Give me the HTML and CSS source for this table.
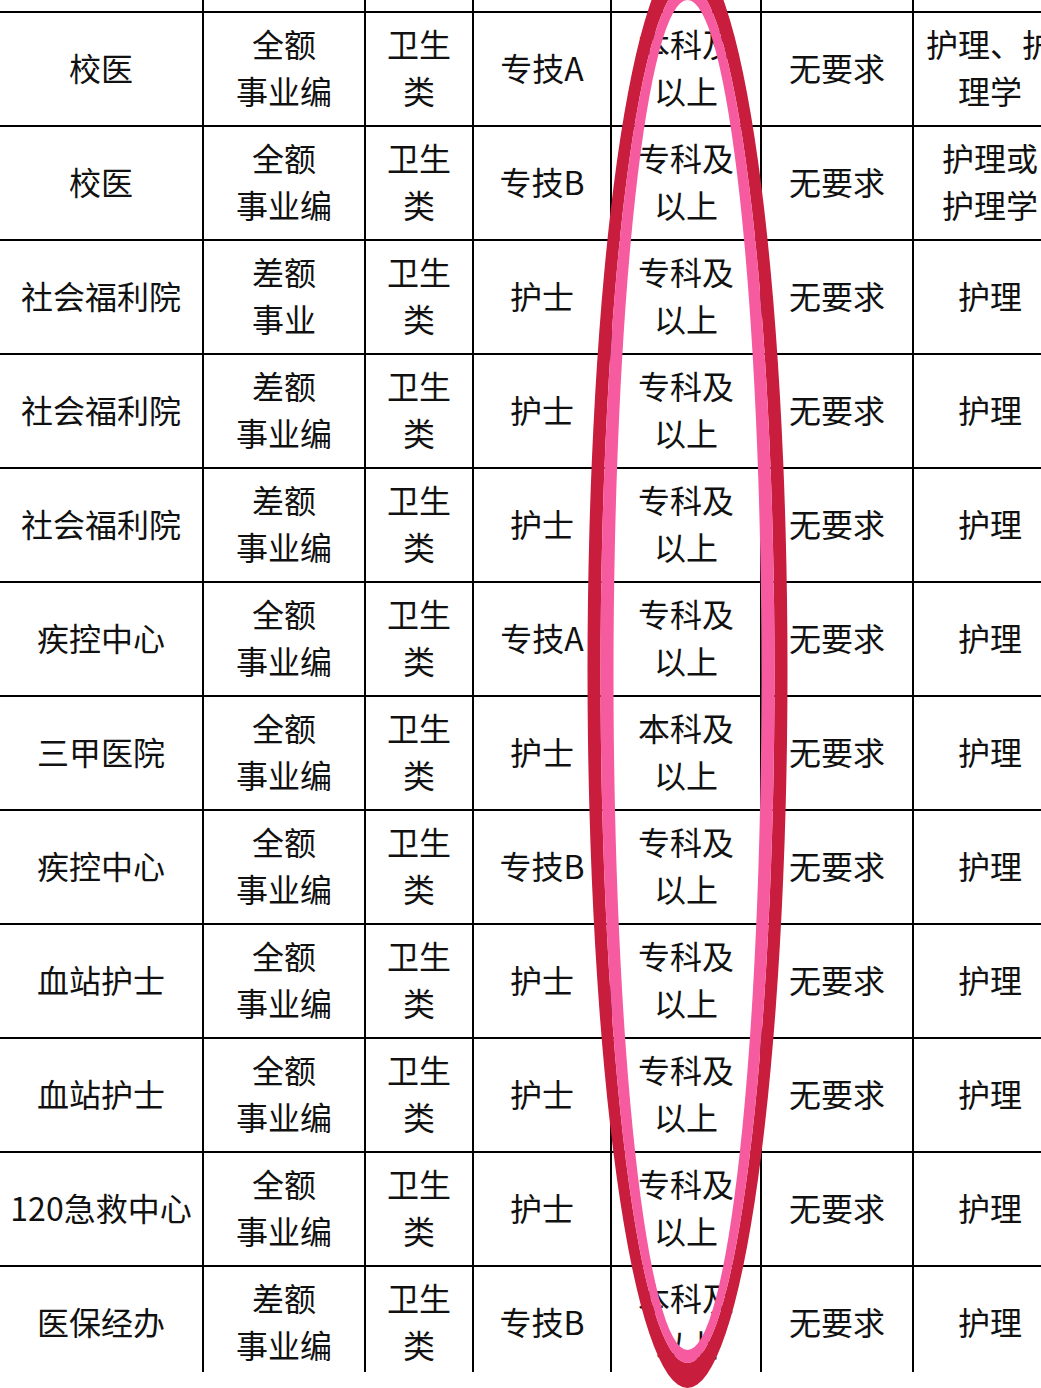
FILE: index.html
```html
<!DOCTYPE html>
<html lang="zh-CN">
<head>
<meta charset="utf-8">
<title>岗位表</title>
<link rel="stylesheet" href="styles.css">
</head>
<body>
<div class="sheet">
  <div class="clip">
    <div class="grid">
      <div class="stub"></div><div class="stub"></div><div class="stub"></div><div class="stub"></div><div class="stub"></div><div class="stub"></div><div class="stub"></div>

      <div class="cell">校医</div><div class="cell">全额<br>事业编</div><div class="cell">卫生<br>类</div><div class="cell">专技A</div><div class="cell">本科及<br>以上</div><div class="cell">无要求</div><div class="cell">护理、护<br>理学</div>

      <div class="cell">校医</div><div class="cell">全额<br>事业编</div><div class="cell">卫生<br>类</div><div class="cell">专技B</div><div class="cell">专科及<br>以上</div><div class="cell">无要求</div><div class="cell">护理或<br>护理学</div>

      <div class="cell">社会福利院</div><div class="cell">差额<br>事业</div><div class="cell">卫生<br>类</div><div class="cell">护士</div><div class="cell">专科及<br>以上</div><div class="cell">无要求</div><div class="cell">护理</div>

      <div class="cell">社会福利院</div><div class="cell">差额<br>事业编</div><div class="cell">卫生<br>类</div><div class="cell">护士</div><div class="cell">专科及<br>以上</div><div class="cell">无要求</div><div class="cell">护理</div>

      <div class="cell">社会福利院</div><div class="cell">差额<br>事业编</div><div class="cell">卫生<br>类</div><div class="cell">护士</div><div class="cell">专科及<br>以上</div><div class="cell">无要求</div><div class="cell">护理</div>

      <div class="cell">疾控中心</div><div class="cell">全额<br>事业编</div><div class="cell">卫生<br>类</div><div class="cell">专技A</div><div class="cell">专科及<br>以上</div><div class="cell">无要求</div><div class="cell">护理</div>

      <div class="cell">三甲医院</div><div class="cell">全额<br>事业编</div><div class="cell">卫生<br>类</div><div class="cell">护士</div><div class="cell">本科及<br>以上</div><div class="cell">无要求</div><div class="cell">护理</div>

      <div class="cell">疾控中心</div><div class="cell">全额<br>事业编</div><div class="cell">卫生<br>类</div><div class="cell">专技B</div><div class="cell">专科及<br>以上</div><div class="cell">无要求</div><div class="cell">护理</div>

      <div class="cell">血站护士</div><div class="cell">全额<br>事业编</div><div class="cell">卫生<br>类</div><div class="cell">护士</div><div class="cell">专科及<br>以上</div><div class="cell">无要求</div><div class="cell">护理</div>

      <div class="cell">血站护士</div><div class="cell">全额<br>事业编</div><div class="cell">卫生<br>类</div><div class="cell">护士</div><div class="cell">专科及<br>以上</div><div class="cell">无要求</div><div class="cell">护理</div>

      <div class="cell">120急救中心</div><div class="cell">全额<br>事业编</div><div class="cell">卫生<br>类</div><div class="cell">护士</div><div class="cell">专科及<br>以上</div><div class="cell">无要求</div><div class="cell">护理</div>

      <div class="cell">医保经办</div><div class="cell">差额<br>事业编</div><div class="cell">卫生<br>类</div><div class="cell">专技B</div><div class="cell">本科及<br>以上</div><div class="cell">无要求</div><div class="cell">护理</div>
    </div>
  </div>
  <svg class="mark" width="1041" height="1388" viewBox="0 0 1041 1388" aria-hidden="true">
    <path class="ring-red" fill-rule="evenodd" d="M587.5 670 A100 718 0 1 0 787.5 670 A100 718 0 1 0 587.5 670 Z M600.5 673 A87 690 0 1 0 774.5 673 A87 690 0 1 0 600.5 673 Z"/>
    <path class="ring-pink" fill-rule="evenodd" d="M600.5 673 A87 690 0 1 0 774.5 673 A87 690 0 1 0 600.5 673 Z M613.5 675 A74 675 0 1 0 761.5 675 A74 675 0 1 0 613.5 675 Z"/>
  </svg>
</div>
</body>
</html>
```
FILE: styles.css
```css
html, body {
  margin: 0;
  padding: 0;
  background: #ffffff;
}

.sheet {
  position: relative;
  width: 1041px;
  height: 1388px;
  overflow: hidden;
  background: #ffffff;
}

.clip {
  width: 1041px;
  height: 1372px;
  overflow: hidden;
}

.grid {
  display: grid;
  grid-template-columns: 204px 162px 108px 138px 150px 152px 154px;
  grid-template-rows: 11px repeat(12, 114px);
  width: 1068px;
  font-family: "Noto Sans CJK SC", "Microsoft YaHei", sans-serif;
  font-size: 32px;
  line-height: 47px;
  color: #111111;
}

.stub {
  box-sizing: border-box;
  border-right: 2px solid #000000;
}

.cell {
  box-sizing: border-box;
  border-top: 2px solid #000000;
  border-right: 2px solid #000000;
  padding-bottom: 4px;
  display: flex;
  align-items: center;
  justify-content: center;
  text-align: center;
  white-space: nowrap;
}

.mark {
  position: absolute;
  left: 0;
  top: 0;
  pointer-events: none;
}

.ring-red {
  fill: #c81d3c;
}

.ring-pink {
  fill: #f65b9f;
}
```
